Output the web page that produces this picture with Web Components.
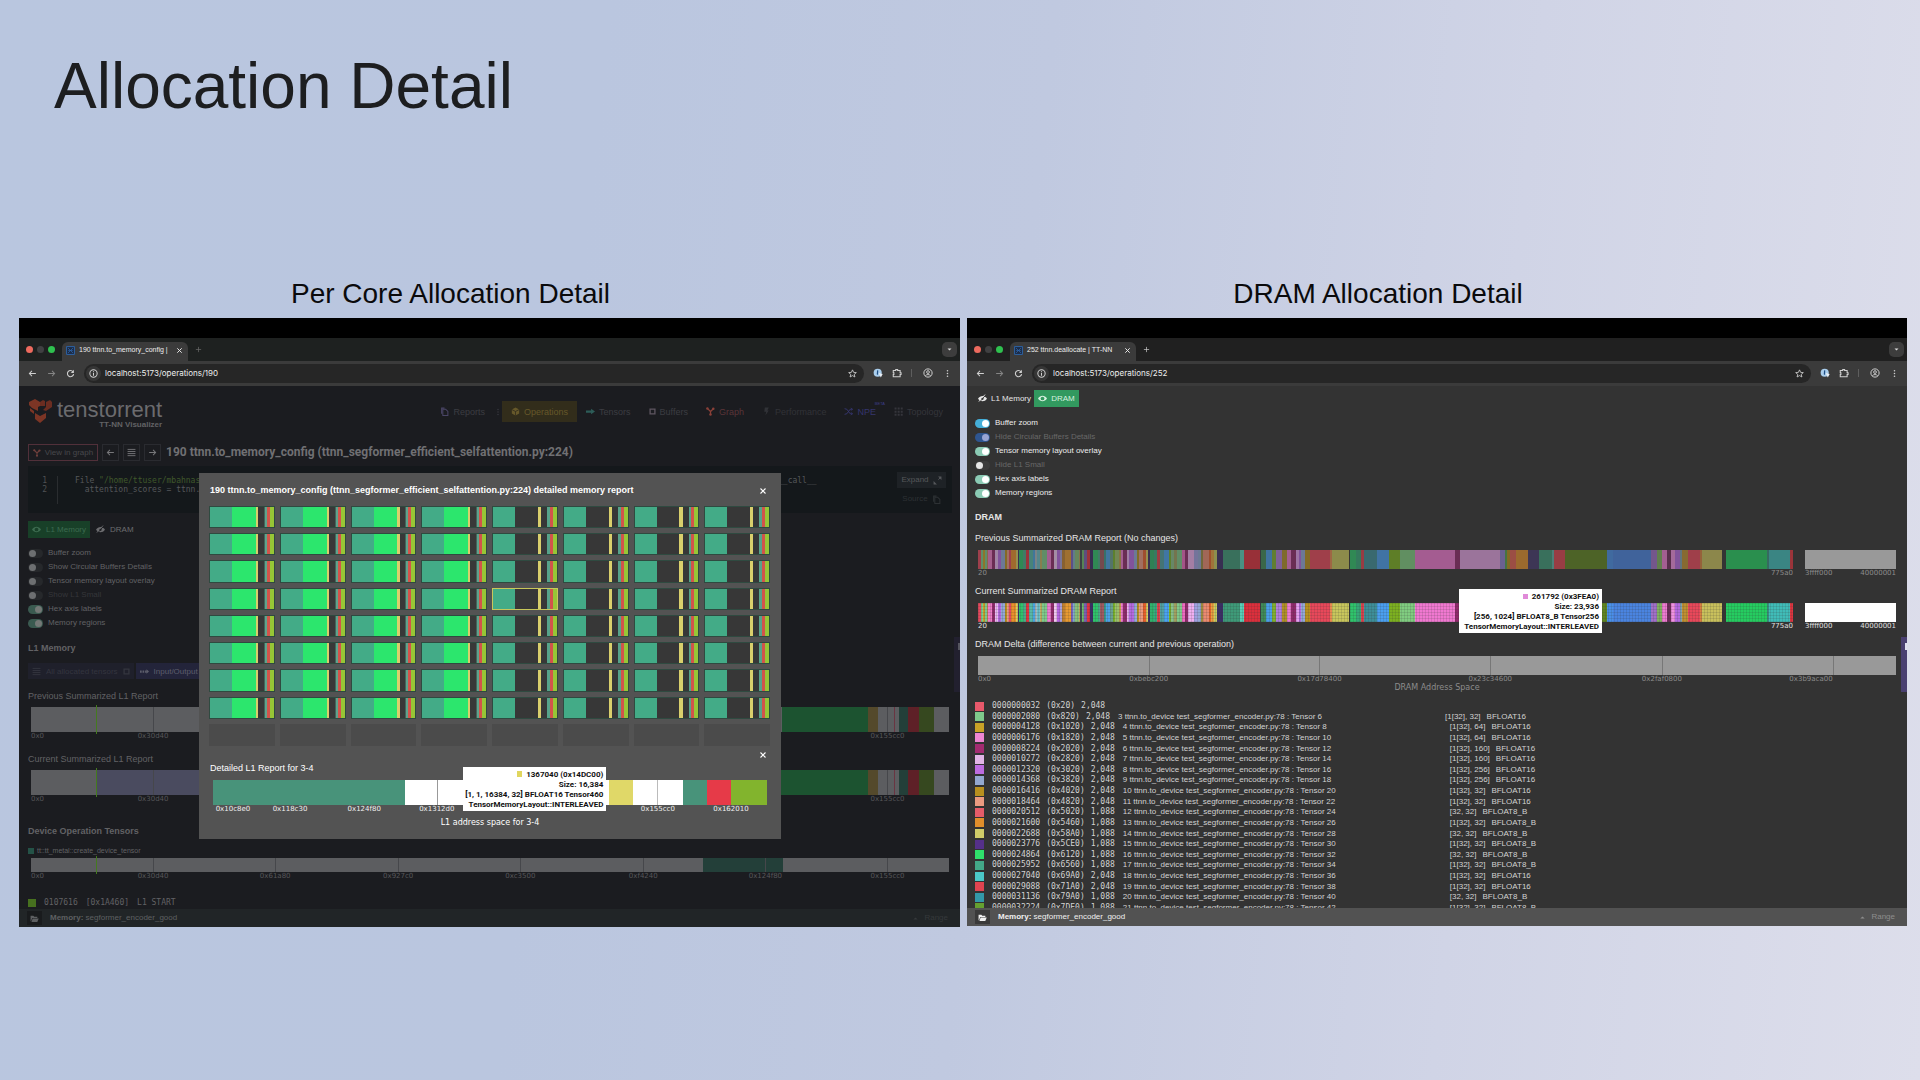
<!DOCTYPE html>
<html lang="en">
<head>
<meta charset="utf-8">
<title>Allocation Detail</title>
<style>
html,body{margin:0;min-height:100%}
body{font-family:"Liberation Sans",Arial,sans-serif;background:linear-gradient(96deg,#b9c6df 0%,#bac6df 30%,#c0c9e0 52%,#d0d4e6 76%,#dddeeb 100%) fixed;color:#1e1e20}
</style>
</head>
<body>
<allocation-slide></allocation-slide>
<script>
const ICONS = {
  back:'<path d="M14 8H3M7 3.500L2.500 8L7 12.500" fill="none" stroke="currentColor" stroke-width="1.800"/>',
  forward:'<path d="M2 8h11M9 3.500L13.500 8L9 12.500" fill="none" stroke="currentColor" stroke-width="1.800"/>',
  reload:'<path d="M12.500 5A5.500 5.500 0 1 0 13.500 9" fill="none" stroke="currentColor" stroke-width="1.900"/><path d="M14 1.500V7H8.500z" fill="currentColor"/>',
  info:'<circle cx="8" cy="8" r="6.500" fill="none" stroke="currentColor" stroke-width="1.800"/><path d="M8 7v5M8 4v1.700" stroke="currentColor" stroke-width="1.800"/>',
  star:'<path d="M8 1.500L10 6l4.800.4-3.700 3.100 1.200 4.700L8 11.700l-4.300 2.500 1.200-4.700L1.200 6.400 6 6z" fill="none" stroke="currentColor" stroke-width="1.500"/>',
  puzzle:'<path d="M2 4h4V2.500h3V4h4v3.500h1.500v3H13V14H2v-3.500h1v-3H2z" fill="none" stroke="currentColor" stroke-width="1.700"/>',
  profile:'<circle cx="8" cy="8" r="6.600" fill="none" stroke="currentColor" stroke-width="1.600"/><circle cx="8" cy="6.500" r="2.200" fill="none" stroke="currentColor" stroke-width="1.500"/><path d="M3.800 12.500c2-2.700 6.400-2.700 8.400 0" fill="none" stroke="currentColor" stroke-width="1.500"/>',
  dots:'<circle cx="8" cy="3" r="1.400" fill="currentColor"/><circle cx="8" cy="8" r="1.400" fill="currentColor"/><circle cx="8" cy="13" r="1.400" fill="currentColor"/>',
  lens:'<circle cx="7.500" cy="7.500" r="6.500" fill="#a9cdec"/><path d="M9 8l6.500 1.500-3 5.500z" fill="#e8eef5"/><path d="M6.500 3.500l2 .5-.5 7-2-1z" fill="#1f4f86"/>',
  chevron:'<path d="M3.500 5.500h9L8 10.500z" fill="currentColor"/>',
  cross:'<path d="M3 3l10 10M13 3L3 13" stroke="currentColor" stroke-width="2.200"/>',
  plus:'<path d="M8 2v12M2 8h12" stroke="currentColor" stroke-width="1.600"/>',
  favicon:'<path d="M1 1h14v14H1z" fill="#1c2c48" stroke="#2d66ad" stroke-width="1.600"/><path d="M3.500 3.500l9 9M12.500 3.500l-9 9M4 8h8" stroke="#2d66ad" stroke-width="1.300" fill="none"/>',
  eye:'<path d="M0 8c4-6.500 12-6.500 16 0c-4 6.500-12 6.500-16 0z" fill="currentColor"/><circle cx="8" cy="8" r="3.300" fill="var(--hole,#32995f)"/>',
  eyeoff:'<path d="M0 8.500c4-6.500 12-6.500 16 0c-4 6-12 6-16 0z" fill="currentColor"/><path d="M3 14L14 1.500" stroke="var(--hole,#333)" stroke-width="1.600"/><path d="M1.500 13.500L12.500 1" stroke="currentColor" stroke-width="1.600"/><circle cx="8" cy="8.500" r="2" fill="var(--hole,#333)"/>',
  folder:'<path d="M1 3h5l1.500 2H13v2H4L1.800 13H1z" fill="currentColor"/><path d="M4.700 8H15.500L13 14H2.500z" fill="currentColor"/>',
  caret:'<path d="M3 10.500L8 5.500l5 5z" fill="currentColor"/>',
  doc:'<path d="M5 4h5l4 4v7H5z" fill="none" stroke="currentColor" stroke-width="1.800"/><path d="M2 1h6v2H4v9H2z" fill="currentColor"/>',
  cube:'<path d="M8 1l6.500 3.300v7.400L8 15l-6.500-3.300V4.300z" fill="currentColor"/><path d="M1.500 4.500L8 8l6.500-3.500M8 8v7" stroke="#2f2a1c" stroke-width="1.400" fill="none"/>',
  flow:'<path d="M0 6h9V3l7 5-7 5v-3H0z" fill="currentColor"/>',
  square:'<path d="M2.500 2.500h11v11h-11z" fill="none" stroke="currentColor" stroke-width="3"/>',
  graph:'<path d="M2 2l6 6 5-5M8 8v6" fill="none" stroke="currentColor" stroke-width="2.200"/><circle cx="2.500" cy="2.500" r="2.200" fill="currentColor"/><circle cx="13" cy="3" r="2.200" fill="currentColor"/><circle cx="8" cy="13.500" r="2.200" fill="currentColor"/>',
  bolt:'<path d="M5 1h7L9.500 6H12L6 15l1.500-6.500H4z" fill="currentColor"/>',
  shuffle:'<path d="M1 3l4 1 6 8h4M1 13l4-1 6-8h4M12.500 1.500L15 4l-2.500 2.500M12.500 9.500L15 12l-2.500 2.500" fill="none" stroke="currentColor" stroke-width="1.700"/>',
  grid:'<path d="M1 1h3.500v3.500H1zM6.500 1H10v3.500H6.500zM12 1h3.500v3.500H12zM1 6.500h3.500V10H1zM6.500 6.500H10V10H6.500zM12 6.500h3.500V10H12zM1 12h3.500v3.500H1zM6.500 12H10v3.500H6.500zM12 12h3.500v3.500H12z" fill="currentColor"/>',
  list:'<path d="M1 2.500h14M1 6.200h14M1 9.900h14M1 13.600h14" stroke="currentColor" stroke-width="1.600"/>',
  expand:'<path d="M9 1h6v6zM1 9v6h6z" fill="currentColor"/><path d="M9.500 6.500L13 3" stroke="currentColor" stroke-width="1.600"/>',
  wave:'<path d="M0 6h3v4H0zM4.500 6h3v4h-3zM9 6h3v4H9z" fill="currentColor"/><path d="M11.500 4l4.500 4-4.500 4z" fill="currentColor"/>'
};
const icon = (n, s = 9) => `<svg class="i" width="${s}" height="${s}" viewBox="0 0 16 16" aria-hidden="true">${ICONS[n]}</svg>`;
const BASE = `<style>
*{box-sizing:border-box}
.i{flex:none;display:block}
button,input{font:inherit;color:inherit;background:none;border:0;padding:0;margin:0;border-radius:0;min-width:0}
button{display:flex;align-items:center;justify-content:center}
a{color:inherit;text-decoration:none}
h1,h2,h3,p{margin:0;font-size:inherit;font-weight:inherit}
</style>`;
const define = (tag, render) => customElements.define(tag, class extends HTMLElement {
  connectedCallback() {
    if (this.shadowRoot) return;
    const t = document.createElement('template');
    t.innerHTML = BASE + render(this);
    this.attachShadow({mode: 'open'}).append(t.content.cloneNode(true));
  }
});

/* Toggle switch with its label */
define('toggle-switch', el => `<style>
:host{display:block;height:14px;font-size:8px;line-height:14px;color:var(--text,#ececec)}
:host([disabled]){color:var(--off-text,#686868)}
label{display:flex;align-items:center;gap:5px;white-space:nowrap}
input{appearance:none;width:15px;height:9px;border-radius:5px;background:var(--track-off,#3c3c3c);display:flex;align-items:center;padding:0 1px;flex:none}
input::before{content:"";width:7px;height:7px;border-radius:50%;background:var(--knob-off,#e6e6e6)}
input:checked{background:var(--track,#8bcab4);justify-content:flex-end}
input:checked::before{background:var(--knob,#fff)}
</style><label><input type="checkbox" ${el.hasAttribute('on') ? 'checked' : ''} ${el.hasAttribute('disabled') ? 'disabled' : ''}><slot></slot></label>`);

/* Segmented memory strip: data is "colour end, colour end ..." counted from start */
define('memory-bar', el => {
  const start = +(el.getAttribute('start') || 0);
  let prev = start;
  const segs = el.getAttribute('data').split(',').map(s => {
    const [c, e] = s.trim().split(' ');
    const w = +e - prev; prev = +e;
    return `<i style="flex:${w} 0 0;background:${c}"></i>`;
  }).join('');
  const ticks = (el.getAttribute('ticks') || '').split(' ').filter(Boolean).map(p => `<b style="left:${p}%"></b>`).join('');
  const labels = (el.getAttribute('labels') || '').split(',').filter(Boolean).map(s => {
    const [txt, p, a] = s.trim().split(' ');
    return `<span class="${a || 'c'}" style="left:${p}%">${txt}</span>`;
  }).join('');
  return `<style>
:host{display:block;position:relative}
.bar{display:flex;position:relative;height:var(--h,25px)}
:host([dim]) .bar{opacity:.6}
i{display:block;min-width:0}
b{position:absolute;top:0;bottom:0;width:1px;background:var(--tick,#46474b)}
:host([dots]) .bar::after{content:"";position:absolute;inset:0;background:repeating-linear-gradient(90deg,rgba(50,50,50,.14) 0 1px,transparent 1px 3px),repeating-linear-gradient(0deg,rgba(50,50,50,.14) 0 1px,transparent 1px 3px)}
.mark{position:absolute;left:7.100%;top:-2px;bottom:-2px;width:1px;background:#457a20}
.axis{position:relative;height:9px;font:7px/9px "DejaVu Sans",sans-serif;color:var(--label,#57575a)}
.axis span{position:absolute;white-space:nowrap}
.axis .c{transform:translateX(-50%)}
.axis .r{transform:translateX(-100%)}
</style><div class="bar">${segs}${ticks}${el.hasAttribute('mark') ? '<div class="mark"></div>' : ''}</div><div class="axis">${labels}</div><slot></slot>`;
});

define('tensor-tip', () => `<style>
:host{display:block;position:absolute;background:#fff;color:#111;font:bold 8px/10px Roboto,"Liberation Sans",sans-serif;text-align:right;padding:3px 3px 1px 2px;min-width:143px;box-sizing:border-box;white-space:nowrap;z-index:2}
</style><slot></slot>`);

/* Grid of cores in the detail dialog */
define('core-grid', () => {
  const wide = 'linear-gradient(90deg,#43ab87 0 35%,#2ce66d 35% 71%,#d9cf6c 71% 75%,#383838 75% 83%,#45645b 83% 85%,#5fa38c 85% 88%,#d2544b 88% 92%,#97c636 92%)';
  const thin = 'linear-gradient(90deg,#43ab87 0 35%,#373737 35% 70%,#d9cf6c 70% 75%,#373737 75% 84%,#56a38a 84% 88%,#d2544b 88% 93%,#97c636 93%)';
  let out = '';
  for (let r = 0; r < 9; r++) for (let c = 0; c < 8; c++) {
    out += r === 8 ? '<button class="off" disabled></button>' : `<button aria-label="Core ${r}-${c}" class="${r === 3 && c === 4 ? 'sel' : ''}" style="background-image:${c < 4 ? wide : thin}"></button>`;
  }
  return `<style>
:host{display:grid;grid-template-columns:repeat(8,1fr);grid-template-rows:repeat(9,1fr);gap:5px;height:240px}
button{border:1px solid #2f4a40;background-origin:border-box}
.off{background:#4b4b4b;border-color:#4b4b4b}
.sel{border-color:#c8c75a}
</style>${out}`;
});

/* Browser chrome */
define('browser-window', el => `<style>
:host{display:flex;flex-direction:column;position:relative;overflow:hidden;min-width:0;background:var(--page)}
.menubar{height:20px;background:#000;flex:none}
.tabs{height:23px;background:var(--strip);display:flex;align-items:flex-end;flex:none;padding-left:7px}
.lights{display:flex;gap:4px;height:23px;align-items:center;padding-right:7px}
.lights i{width:7px;height:7px;border-radius:50%}
.tab{display:flex;align-items:center;gap:4px;width:126px;height:19px;border-radius:6px 6px 0 0;background:#3b3b3b;padding:0 5px 3px 4px;font-size:7px;line-height:12px;color:#ececec}
.tab span{flex:1;white-space:nowrap}
.new{margin:0 auto 8px 7px;color:var(--plus)}
.down{width:15px;height:15px;border-radius:5px;background:#3d3d3d;color:#ddd;margin:0 3px 4px 0}
.tool{height:25px;background:#3b3b3b;display:flex;align-items:center;padding:0 8px 1px;color:#d0d0d0;flex:none}
.tool>button{width:10px;margin-right:9px}
.tool .fwd{color:#858585}
.url{flex:1;display:flex;align-items:center;height:19px;border-radius:10px;background:#262626;padding:0 7px 0 2px;gap:4px;margin-right:9px}
.url .inf{width:15px;height:15px;border-radius:8px;background:#363636}
.url input{flex:1;font:8px/12px Inter,sans-serif;color:#eee}
.tool .sep{width:1px;height:8px;background:#5e5e5e;margin-right:11px}
.tool>.last{margin:0}
main{flex:1;min-height:0;padding:0 8px;overflow:hidden}
footer{position:absolute;left:0;right:0;bottom:0;height:18px;background:var(--foot);display:flex;align-items:center;padding:0 12px 0 8px;gap:8px;font-size:8px;line-height:12px;color:var(--foot-text)}
footer .fold{width:15px;height:14px;background:var(--fold)}
footer p{flex:1}
footer .rng{color:var(--range);gap:5px}
.side{position:absolute;right:0;top:52.400%;width:6px;height:55px;background:var(--side)}
.side::after{content:"";position:absolute;right:0;top:6px;width:2px;height:7px;background:var(--side-ink)}
</style>
<div class="menubar"></div>
<div class="tabs"><div class="lights"><i style="background:#ed6a5e"></i><i style="background:#404042"></i><i style="background:#2fc14f"></i></div>
<div class="tab">${icon('favicon', 9)}<span>${el.getAttribute('tab')}</span><button aria-label="Close tab">${icon('cross', 7)}</button></div>
<button class="new" aria-label="New tab">${icon('plus', 7)}</button><button class="down" aria-label="Tab list">${icon('chevron', 7)}</button></div>
<div class="tool"><button aria-label="Back">${icon('back', 9)}</button><button class="fwd" aria-label="Forward">${icon('forward', 9)}</button><button aria-label="Reload">${icon('reload', 9)}</button>
<div class="url"><button class="inf" aria-label="Site information">${icon('info', 9)}</button><input aria-label="Address" value="${el.getAttribute('url')}"><button aria-label="Bookmark">${icon('star', 9)}</button></div>
<button aria-label="Inspector">${icon('lens', 10)}</button><button aria-label="Extensions">${icon('puzzle', 10)}</button><i class="sep"></i><button aria-label="Profile">${icon('profile', 10)}</button><button class="last" aria-label="Menu">${icon('dots', 9)}</button></div>
<main><slot></slot></main>
<div class="side"></div>
<footer><button class="fold" aria-label="Open report">${icon('folder', 9)}</button><p><strong>Memory:</strong> segformer_encoder_good</p><button class="rng">${icon('caret', 7)}Range</button></footer>
<slot name="dialog"></slot>`);

const AX = '0x0 0 l,0x30d40 13.3,0x61a80 26.6,0x927c0 40,0xc3500 53.3,0xf4240 66.7,0x124f80 80,0x155cc0 93.3';
const TK = '13.3 26.6 40 53.3 66.7 80 93.3';
/* The summary strips run on under the dialog, which covers their middle ticks */
const AXS = '0x0 0 l,0x30d40 13.3,0x155cc0 93.3';
const TKS = '13.3 93.3';
const tail = ',#1c5330 868,#54492b 878,#5c5d60 894,#6a3542 895,#5c5d60 899,#233f39 908,#5e2027 919,#36481f 934,#5c5d60 949';

/* Operation page shown behind the core dialog */
define('operation-page', () => `<style>
:host{display:block;color:#626265;--text:#626265;--off-text:#35363a;--track-off:#26282b;--knob-off:#6d6f71;--track:#3a5a50;--knob:#747876;padding-left:1px}
header{height:58px;display:flex;align-items:center;justify-content:space-between;padding-bottom:7px}
.brand{display:flex;gap:5px;padding-top:4px}
.brand>div{text-align:right}
.brand h2{font-size:22px;line-height:22px;color:#6b6b6e}
.brand p{font-size:8px;line-height:8px;font-weight:bold}
nav{display:flex;align-items:center;font-size:9px;height:21px;color:#3c3c42}
nav a{display:flex;align-items:center;gap:4px;height:21px;padding:0 9px;position:relative}
nav .on{background:#322d1b;color:#66582a}
nav sup{position:absolute;right:0;top:0;font-size:4px;line-height:6px;color:#3c3c88}
.ttl{display:flex;gap:4px;align-items:center;height:17px}
.ttl button{border:1px solid #2a2b30;width:17px;height:17px;color:#77777a}
.ttl .vg{width:70px;border-color:#51303a;font-size:8px;gap:4px;color:#48484c}
.ttl h2{font-size:12px;line-height:17px;margin-left:1px;color:#707073;white-space:nowrap;font-family:Roboto,sans-serif;font-weight:700}
.code{display:flex;height:47px;margin-top:5px;background:#14181b;font:8px/9px "DejaVu Sans Mono",monospace;padding-top:10px}
.code .n{width:30px;padding:0 10px 0 0;text-align:right;height:28px;border-right:1px solid #2a2d30;color:#4f5154}
.code pre{margin:0;font:inherit;padding-left:17px;width:720px;color:#55575a}
.code pre em{font-style:normal;color:#40592b}
.code .a{margin-left:auto;margin-right:6px;font:8px/12px "Liberation Sans",sans-serif;margin-top:-4px}
.code .a button{width:49px;height:16px;gap:4px;background:#1e2226;color:#56585b}
.code .a button+button{background:none;color:#2d3134;margin-top:3px}
.sw{display:flex;gap:2px;margin:8px 0;font-size:8px;height:17px}
.sw button{gap:5px;padding:0 4px;color:#6c6c6f;--hole:#1b1c20}
.sw .on{background:#184028;color:#3d6b50;--hole:#184028}
h3{font-size:9px;line-height:12px}
.bold{font-weight:bold}
.io{display:flex;gap:2px;margin:9px 0 11px;height:16px;font-size:8px}
.io button{background:#1f202b;color:#34353f;gap:5px;padding:0 4px}
.io button+button{background:#23243a;color:#5d5e6c}
memory-bar{margin:5px 3px 0;--h:25px}
.mk{display:flex;align-items:center;gap:3px;font-size:7px;line-height:10px;margin-top:9px}
.mk i{width:6px;height:6px;background:#245247}
.st{display:flex;gap:8px;align-items:center;font:8px/10px "DejaVu Sans Mono",monospace;margin-top:17px}
.st i{width:8px;height:8px;background:#47701f}
</style>
<header><div class="brand"><svg width="24" height="24" viewBox="0 0 24 24" aria-hidden="true"><path d="M1 3l6-3 5 3v4l-2 1v4l-6-3-3-3z" fill="#7c3525"/><path d="M12 7V3l3-2 2 1v5zM18 3l4-2 2 2v5l-6 4-3-1 3-3z" fill="#6b2d21"/><path d="M2 9l4 3v3l-4-3zM7 14l5 3 6-3v5l-6 5-5-4z" fill="#7c3525"/></svg>
<div><h2>tenstorrent</h2><p>TT-NN Visualizer</p></div></div>
<nav><a href="#"><span style="color:#4a4566">${icon('doc')}</span>Reports</a>${icon('dots', 8)}<a class="on" href="#">${icon('cube')}Operations</a><a href="#"><span style="color:#2d5c58">${icon('flow')}</span>Tensors</a><a href="#"><span style="color:#5f5560">${icon('square', 7)}</span>Buffers</a><a href="#" style="color:#5a3438"><span style="color:#8a4038">${icon('graph')}</span>Graph</a><a href="#" style="color:#313237">${icon('bolt')}Performance</a><a href="#" style="color:#35356e">${icon('shuffle')}NPE<sup>BETA</sup></a><a href="#" style="color:#35353b">${icon('grid')}Topology</a></nav></header>
<div class="ttl"><button class="vg"><span style="color:#70403c">${icon('graph', 8)}</span>View in graph</button><button aria-label="Previous">${icon('back')}</button><button aria-label="Operations list">${icon('list')}</button><button aria-label="Next">${icon('forward')}</button><h2>190 ttnn.to_memory_config (ttnn_segformer_efficient_selfattention.py:224)</h2></div>
<div class="code"><div class="n">1<br>2</div><pre>File <em>"/home/ttuser/mbahnas/</em>
  attention_scores = ttnn.t</pre><pre style="padding:0;width:auto">__call__</pre><div class="a"><button>Expand ${icon('expand', 9)}</button><button>Source ${icon('doc', 9)}</button></div></div>
<div class="sw"><button class="on">${icon('eye')}L1 Memory</button><button>${icon('eyeoff')}DRAM</button></div>
<toggle-switch>Buffer zoom</toggle-switch><toggle-switch>Show Circular Buffers Details</toggle-switch><toggle-switch>Tensor memory layout overlay</toggle-switch><toggle-switch disabled>Show L1 Small</toggle-switch><toggle-switch on>Hex axis labels</toggle-switch><toggle-switch on>Memory regions</toggle-switch>
<h3 class="bold" style="margin-top:12px">L1 Memory</h3>
<div class="io"><button>${icon('list')}All allocated tensors ${icon('square', 7)}</button><button>${icon('wave')}Input/Output</button></div>
<h3>Previous Summarized L1 Report</h3>
<memory-bar mark start="31" data="#5c5d60 782${tail}" ticks="${TKS}" labels="${AXS}"></memory-bar>
<h3 style="margin-top:12px">Current Summarized L1 Report</h3>
<memory-bar mark start="31" data="#5c5d60 97,#4a4b5f 703${tail}" ticks="${TKS}" labels="${AXS}"></memory-bar>
<h3 class="bold" style="margin-top:21px">Device Operation Tensors</h3>
<div class="mk"><i></i>tt::tt_metal::create_device_tensor</div>
<memory-bar mark style="--h:14px;margin-top:2px" start="31" data="#5c5d60 703,#233f39 783,#5c5d60 949" ticks="${TK}" labels="${AX}"></memory-bar>
<div class="st"><i></i><span>0107616</span><span>[0x1A460]</span><span>L1 START</span></div>`);

define('core-dialog', () => `<style>
:host{display:block;position:absolute;left:180px;right:179px;top:155px;background:#535353;color:#fff;padding:11px 10px 11px;z-index:3}
.hd{display:flex;justify-content:space-between;align-items:center;font-size:9px;line-height:13px;font-weight:bold;margin-bottom:9px;padding-right:4px}
.cl{display:flex;justify-content:flex-end;padding-right:4px;height:8px;margin-top:5px}
h3{font-size:9px;line-height:12px;margin:3px 0 6px 1px}
memory-bar{margin:0 4px;--h:25px;--label:#f0f0f0;--tick:transparent}
tensor-tip{right:29%;top:-13px}
tensor-tip i{display:inline-block;width:5px;height:6px;background:#e0d65f;margin-right:4px}
p{text-align:center;font:8px/11px "DejaVu Sans",sans-serif;margin-top:3px}
core-grid{margin-right:1px}
</style>
<div class="hd"><h2 style="margin-left:1px">190 ttnn.to_memory_config (ttnn_segformer_efficient_selfattention.py:224) detailed memory report</h2><button aria-label="Close">${icon('cross', 8)}</button></div>
<core-grid></core-grid>
<div class="cl"><button aria-label="Close core report">${icon('cross', 8)}</button></div>
<h3>Detailed L1 Report for 3-4</h3>
<memory-bar start="213" data="#48937a 405,#fff 437,#999 438,#fff 609,#e0d868 633,#fff 657,#bbb 658,#fff 683,#48937a 707,#e63a48 731,#82b42d 767" labels="0x10c8e0 3.6,0x118c30 13.9,0x124f80 27.3,0x1312d0 40.4,0x13d620 53.8,0x149970 67,0x155cc0 80.3,0x162010 93.5"><tensor-tip><i></i>1367040 (0x14DC00)<br>Size: 16,384<br>[1, 1, 16384, 32] BFLOAT16 Tensor460<br>TensorMemoryLayout::INTERLEAVED</tensor-tip></memory-bar>
<p>L1 address space for 3-4</p>`);

const STRIP = `#e5485d 64,#7fc98b 69,#c9a227 74,#7fc98b 80,#c48a5a 84,#f07cc8 96,#8f2a6b 104,#e9b8f0 114,#b569e0 123,#93a8d6 136,#b8901f 142,#eb9a80 148,#e5485d 154,#e8902b 168,#d8cc60 173,#3a2e66 177,#2fc36b 188,#49ab88 199,#e0333f 208,#57b8a8 220,#4aa3e0 224,#a8b8c0 232,#6cc0c8 240,#c0b060 246,#7fc98b 262,#ee7bd0 273,#8f2a6b 282,#f0c8f0 292,#b565e0 300,#a8a0d8 306,#c08030 314,#e89a30 334,#7a63c0 340,#7fb0c0 346,#8ac07a 356,#c0a060 361,#3d4a50 366,#6fb96b 373,#7a60b0 380,#e0333f 390,#3a2e66 399,#2fc36b 413,#49ab88 419,#a05a60 431,#3a9a90 439,#4aa3e8 451,#6aa090 460,#7ab32a 466,#9cc06b 476,#c0a050 482,#ee7bd0 490,#8f2a6b 501,#e9b0f0 508,#b569e0 523,#93a8d6 530,#b8901f 536,#eb9a80 550,#e8602b 559,#d8cc60 564,#3a2e66 569,#2fb36b 582,#3aa880 592,#e0434f 601,#50a0a0 611,#4aa3f0 627,#7ab32a 634,#8ac08b 643,#a0a060 652,#7fc98b 665,#ee6bc0 676,#8f2a6b 685,#f0b0f0 703,#a0a0e0 713,#93a8d6 724,#9a8a3f 729,#eb8a70 747,#e5602b 753,#e8a040 761,#c8cc60 772,#3a2e66 788,#3e9a78 840,#58d0b8 853,#dc2f3c 901,#3c3c44 904,#3f8a58 917,#4a9fe8 937,#80b030 948,#b080dc 967,#b09028 980,#ee7bd0 992,#8f2a6b 1008,#e6a0f0 1016,#b569e0 1024,#93a8d6 1034,#b8901f 1050,#e8485a 1110,#e88850 1116,#c8c65c 1166,#353535 1170,#2fc36b 1187,#36a878 1202,#dc434f 1212,#3d8e98 1251,#4a9ff0 1288,#7cb020 1320,#80cc80 1364,#f078d0 1485,#8f2a6b 1500,#e0a0e0 1620,#9080d0 1635,#50a050 1640,#b8901f 1650,#e06050 1668,#e0902b 1704,#45386c 1737,#3e9a78 1775,#60b0a8 1781,#dc4450 1815,#5f8420 1940,#4a90e8 1958,#4a84e0 2072,#a070c8 2090,#80b060 2105,#ee7bd0 2121,#6f2a5b 2132,#f090e0 2145,#b569e0 2160,#80a0b0 2165,#c09030 2184,#e8485a 2221,#d88040 2225,#c8c05c 2286,#353535 2297,#25cc60 2421,#389080 2428,#40bcb8 2490,#e03540 2499`;

define('dram-list', () => {
  const cols = '#e8596b #7fc98b #c9a227 #ee86d2 #a32b71 #e2b5e6 #bd6ce0 #93a8d0 #b8901f #eb9a80 #e55c69 #e08e2b #d0cc68 #55308a #2fe06b #43a888 #4bc8c8 #e04450 #3398a8 #65a030'.split(' ');
  const addr = [32,2080,4128,6176,8224,10272,12320,14368,16416,18464,20512,21600,22688,23776,24864,25952,27040,29088,31136,32224];
  const b8 = new Set([10,11,12,13,14,15,18,19]), two = new Set([10,12,14,18]);
  const w = {2:64,3:64,4:160,5:160,6:256,7:256};
  const rows = addr.map((a, i) => {
    const op = i ? `<span class="op">${i + 2} ttnn.to_device test_segformer_encoder.py:78 : Tensor ${i * 2 + 4}</span><span class="sh">${two.has(i) ? '[32, 32]' : `[1[32], ${w[i] || 32}]`}</span><span class="sh">${b8.has(i) ? 'BFLOAT8_B' : 'BFLOAT16'}</span>` : '';
    return `<li><i style="background:${cols[i]}"></i><span>${String(a).padStart(10, '0')}</span><span>(0x${a.toString(16).toUpperCase()})</span><span>${b8.has(i) ? '1,088' : '2,048'}</span>${op}</li>`;
  }).join('');
  return `<style>
:host{display:block}
ul{list-style:none;margin:0;padding:0;height:212px;display:flex;flex-direction:column;justify-content:space-between}
li{display:flex;gap:6px;align-items:center;height:10px;font:8px/10px "DejaVu Sans Mono",monospace;color:#d2d2d2;white-space:nowrap}
li i{width:9px;height:9px;margin-right:2px;flex:none}
.op,.sh{font-family:"Liberation Sans",sans-serif}
.op{width:321px;margin-left:2px}
</style><ul>${rows}</ul>`;
});

define('dram-page', () => `<style>
:host{display:block;color:#e6e6e6}
.sw{display:flex;margin:4px 0 9px;font-size:8px;height:17px}
.sw button{gap:4px;width:59px;--hole:#333}
.sw .on{background:#32995f;--hole:#32995f;width:45px;color:#d5f0df}
h3{font-size:9px;line-height:12px;margin-top:7px;white-space:nowrap}
.pair{display:flex;gap:12px;margin:6px 3px 0;position:relative}
.pair memory-bar{flex:815 0 0}
.pair memory-bar+memory-bar{flex:91 0 0}
memory-bar{--h:19px;--label:#8c8c8c;--tick:#777}
.cur memory-bar{--label:#e0e0e0}
tensor-tip{left:52.400%;top:-14px}
tensor-tip i{display:inline-block;width:5px;height:5px;background:#e08ad8;margin-right:4px}
p{text-align:center;font:8px/8px "DejaVu Sans",sans-serif;color:#8c8c8c;margin-bottom:9px}
</style>
<div class="sw"><button>${icon('eyeoff')}L1 Memory</button><button class="on">${icon('eye')}DRAM</button></div>
<toggle-switch on style="--track:#45aed8">Buffer zoom</toggle-switch><toggle-switch on disabled style="--track:#2e5590;--knob:#98a4d4">Hide Circular Buffers Details</toggle-switch><toggle-switch on>Tensor memory layout overlay</toggle-switch><toggle-switch disabled>Hide L1 Small</toggle-switch><toggle-switch on>Hex axis labels</toggle-switch><toggle-switch on>Memory regions</toggle-switch>
<h3 style="font-weight:bold;margin:11px 0 9px">DRAM</h3>
<h3>Previous Summarized DRAM Report (No changes)</h3>
<div class="pair"><memory-bar dim start="54" data="${STRIP}" labels="20 0 l,775a0 100 r"></memory-bar><memory-bar start="0" data="#999 1" labels="3ffff000 0 l,40000001 100 r"></memory-bar></div>
<h3>Current Summarized DRAM Report</h3>
<div class="pair cur"><memory-bar dots start="54" data="${STRIP}" labels="20 0 l,775a0 100 r"></memory-bar><memory-bar start="0" data="#fff 1" labels="3ffff000 0 l,40000001 100 r"></memory-bar>
<tensor-tip><i></i>261792 (0x3FEA0)<br>Size: 23,936<br>[256, 1024] BFLOAT8_B Tensor256<br>TensorMemoryLayout::INTERLEAVED</tensor-tip></div>
<h3>DRAM Delta (difference between current and previous operation)</h3>
<memory-bar style="margin:6px 3px 0" data="#999 1" ticks="18.6 37.2 55.8 74.5 93.1" labels="0x0 0 l,0xbebc200 18.6,0x17d78400 37.2,0x23c34600 55.8,0x2faf0800 74.5,0x3b9aca00 93.1 r"></memory-bar>
<p>DRAM Address Space</p>
<dram-list></dram-list>`);

define('allocation-slide', () => `<style>
:host{display:block;padding:49px 13px 40px 19px}
h1{font-size:64px;line-height:74px;padding-left:35px;color:#1d1e20}
.cols{display:grid;grid-template-columns:941fr 940fr;column-gap:7px;margin-top:155px}
.cols h2{font-size:28px;line-height:32px;text-align:center;color:#0a0a0c;margin-bottom:8px}
.cols h2:nth-child(1){padding-right:78px}
.cols h2:nth-child(2){padding-right:118px}
browser-window{aspect-ratio:941/609}
.l{--page:#1b1c20;--strip:#1e2120;--plus:#6a6a6a;--foot:#212527;--fold:#191b1d;--foot-text:#5e6062;--range:#35393b;--side:#22202f;--side-ink:#55555f}
.r{--page:#333;--strip:#202020;--plus:#ccc;--foot:#525252;--fold:#3a3a3a;--foot-text:#f0f0f0;--range:#8d8d8d;--side:#4a4070;--side-ink:#e0e0f0}
</style>
<h1>Allocation Detail</h1>
<div class="cols"><h2>Per Core Allocation Detail</h2><h2>DRAM Allocation Detail</h2>
<browser-window class="l" tab="190 ttnn.to_memory_config |" url="localhost:5173/operations/190"><operation-page></operation-page><core-dialog slot="dialog"></core-dialog></browser-window>
<browser-window class="r" tab="252 ttnn.deallocate | TT-NN" url="localhost:5173/operations/252"><dram-page></dram-page></browser-window></div>`);
</script>
</body>
</html>
